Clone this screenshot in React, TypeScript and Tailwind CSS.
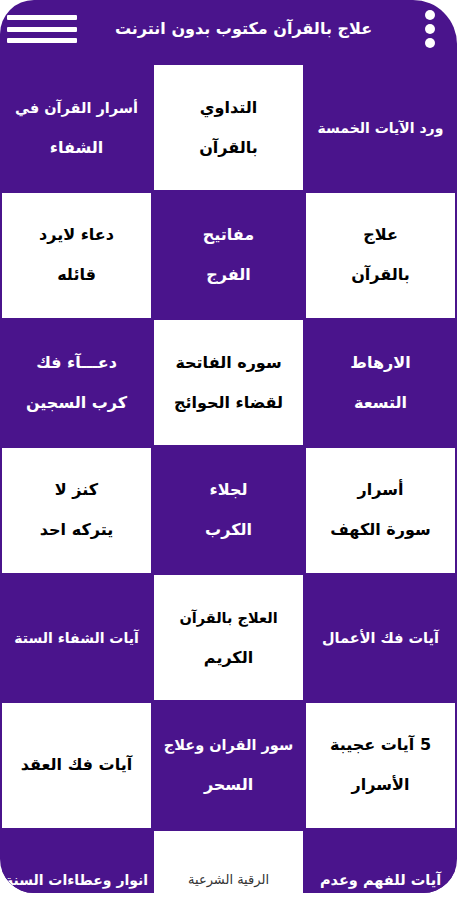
type Cell = { lines: string[]; dark: boolean; small?: boolean };

const cells: Cell[] = [
  { lines: ["ورد الآيات الخمسة"], dark: true },
  { lines: ["التداوي", "بالقرآن"], dark: false },
  { lines: ["أسرار القرآن في", "الشفاء"], dark: true },

  { lines: ["علاج", "بالقرآن"], dark: false },
  { lines: ["مفاتيح", "الفرج"], dark: true },
  { lines: ["دعاء لايرد", "قائله"], dark: false },

  { lines: ["الارهاط", "التسعة"], dark: true },
  { lines: ["سوره الفاتحة", "لقضاء الحوائج"], dark: false },
  { lines: ["دعـــآء فك", "كرب السجين"], dark: true },

  { lines: ["أسرار", "سورة الكهف"], dark: false },
  { lines: ["لجلاء", "الكرب"], dark: true },
  { lines: ["كنز لا", "يتركه احد"], dark: false },

  { lines: ["آيات فك الأعمال"], dark: true },
  { lines: ["العلاج بالقرآن", "الكريم"], dark: false },
  { lines: ["آيات الشفاء الستة"], dark: true },

  { lines: ["5 آيات عجيبة", "الأسرار"], dark: false },
  { lines: ["سور القران وعلاج", "السحر"], dark: true },
  { lines: ["آيات فك العقد"], dark: false },
];

const lastRow: Cell[] = [
  { lines: ["آيات للفهم وعدم"], dark: true },
  { lines: ["الرقية الشرعية"], dark: false, small: true },
  { lines: ["انوار وعطاءات السنة"], dark: true },
];

function lineClass(line: string, small?: boolean) {
  if (small) return "text-[13px] leading-[40px] font-normal text-[#333]";
  if (line.length > 16) return "text-[14px] leading-[40px] font-bold whitespace-nowrap";
  if (line.length > 13) return "text-[14.5px] leading-[40px] font-bold whitespace-nowrap";
  return "text-[16px] leading-[40px] font-bold whitespace-nowrap";
}

function Tile({ cell, last }: { cell: Cell; last?: boolean }) {
  return (
    <div
      className={
        "flex flex-col items-center justify-center text-center overflow-hidden " +
        (cell.dark ? "bg-[#4a148c] text-white " : "bg-white text-black ") +
        (last ? "pb-[26px]" : "")
      }
    >
      {cell.lines.map((line, i) => (
        <span key={i} className={lineClass(line, cell.small)}>
          {line}
        </span>
      ))}
    </div>
  );
}

export default function App() {
  return (
    <div className="min-h-screen bg-white" style={{ fontFamily: '"DejaVu Sans", sans-serif' }}>
      <div className="h-[893px] overflow-hidden rounded-tl-[34px] rounded-tr-[44px] rounded-b-[34px] bg-[#4a148c]">
        {/* Header */}
        <div className="h-[65px] flex items-center pb-[7px]">
          <div className="ml-[7px] w-[70px] flex flex-col gap-[6.5px]">
            <div className="h-[5px] bg-white rounded-[1px]" />
            <div className="h-[5px] bg-white rounded-[1px]" />
            <div className="h-[5px] bg-white rounded-[1px]" />
          </div>
          <h1 dir="rtl" className="flex-1 text-center text-white font-bold text-[16px] whitespace-nowrap">
            علاج بالقرآن مكتوب بدون انترنت
          </h1>
          <div className="w-[47px] flex flex-col gap-[4px] pl-[15px]">
            <div className="w-[10px] h-[10px] rounded-full bg-white" />
            <div className="w-[10px] h-[10px] rounded-full bg-white" />
            <div className="w-[10px] h-[10px] rounded-full bg-white" />
          </div>
        </div>

        {/* Grid */}
        <div dir="rtl" className="grid grid-cols-3 auto-rows-[125px] gap-x-[3px] gap-y-[2.6px] px-[2px]">
          {cells.map((c, i) => (
            <Tile key={i} cell={c} />
          ))}
          {lastRow.map((c, i) => (
            <Tile key={"l" + i} cell={c} last />
          ))}
        </div>
      </div>
    </div>
  );
}
